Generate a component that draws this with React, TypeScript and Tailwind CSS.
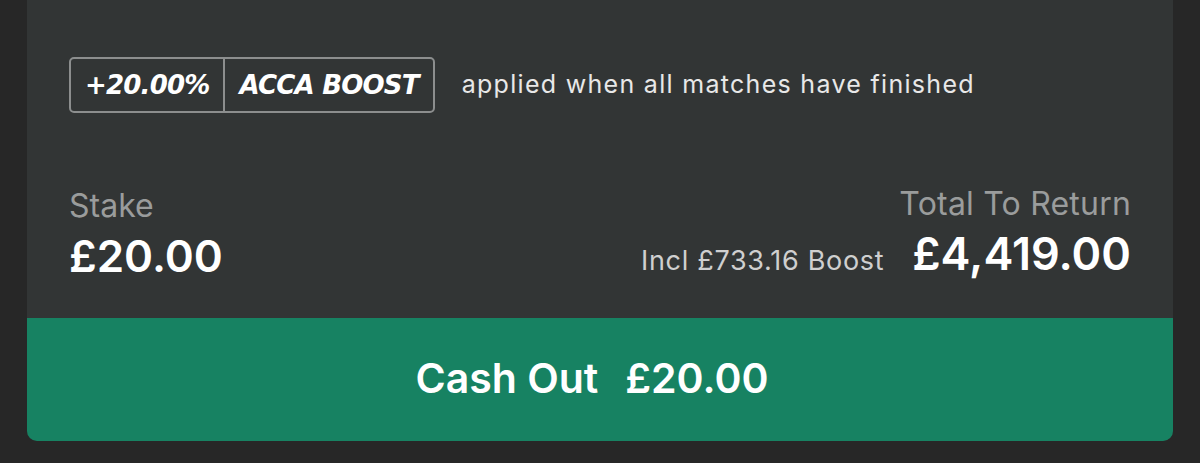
export default function App() {
  return (
    <div className="min-h-[463px] bg-[#272727] px-[27px]" style={{ fontFamily: "Inter, 'Liberation Sans', sans-serif" }}>
      <div className="bg-[#323535] rounded-b-[10px] overflow-hidden">
        <div className="px-[42px] pt-[57px] pb-[36px]">
          {/* Boost badge */}
          <div className="flex items-center gap-[27px]">
            <div
              className="flex h-[56px] items-stretch rounded-[5px] border-2 border-[#8c8e8e] text-white"
              style={{ fontFamily: "'DejaVu Sans', Verdana, sans-serif" }}
            >
              <span className="flex items-center px-[14px] text-[26px] font-bold italic tracking-[-0.8px]">+20.00%</span>
              <span className="w-[2px] bg-[#8c8e8e]" />
              <span className="flex items-center px-[14px] text-[26px] font-bold italic tracking-[-0.8px]">ACCA BOOST</span>
            </div>
            <span className="text-[25px] text-[#e8e8e8] tracking-[1.3px]">
              applied when all matches have finished
            </span>
          </div>

          {/* Stake / return */}
          <div className="mt-[73px] flex items-end justify-between">
            <div className="flex flex-col">
              <span className="text-[32px] leading-[36px] text-[#9a9c9c]">Stake</span>
              <span className="mt-[6px] text-[44px] leading-[52px] font-semibold text-white">£20.00</span>
            </div>
            <div className="flex flex-col items-end">
              <span className="text-[32px] leading-[36px] text-[#9a9c9c] tracking-[0.2px]">Total To Return</span>
              <div className="mt-[6px] flex items-baseline gap-[28px]">
                <span className="text-[27px] text-[#cfcfcf] tracking-[0.7px]">Incl £733.16 Boost</span>
                <span className="text-[45px] leading-[52px] font-semibold text-white">£4,419.00</span>
              </div>
            </div>
          </div>
        </div>

        {/* Cash out */}
        <button className="flex h-[123px] w-full items-center justify-center gap-[27px] bg-[#178262] pr-[16px] text-[41px] font-semibold text-white">
          <span>Cash Out</span>
          <span>£20.00</span>
        </button>
      </div>
    </div>
  );
}
